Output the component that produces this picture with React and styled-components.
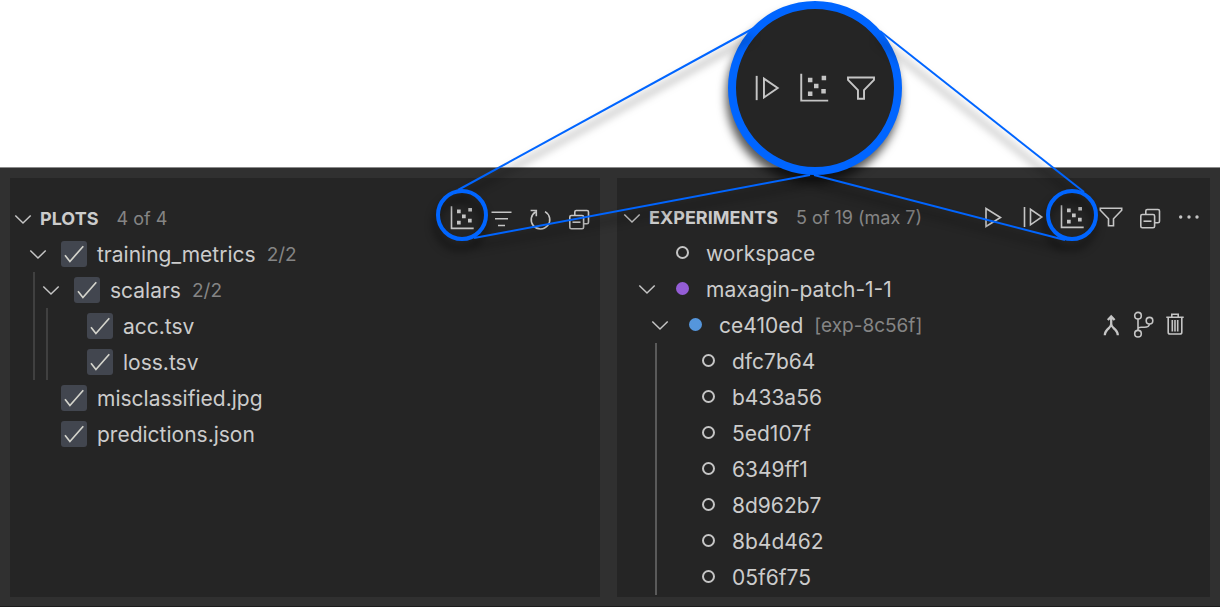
import React, { useLayoutEffect, useRef, useState } from "react";
import styled, { createGlobalStyle, ThemeProvider, css } from "styled-components";

const theme = {
  frame: "#303030",
  panel: "#252525",
  text: "#cccccc",
  muted: "#858585",
  icon: "#c5c5c5",
  accent: "#0065ff",
  checkbox: "#42464f",
  guide: "#404040",
  guideActive: "#5a5a5a",
  purple: "#945dd6",
  blue: "#5596dc",
};

const GlobalStyle = createGlobalStyle`
  * { box-sizing: border-box; }
  body {
    margin: 0;
    background: #ffffff;
    font-family: Inter, "Liberation Sans", sans-serif;
  }
`;

const Page = styled.main`
  position: relative;
  padding-top: 167px;
  overflow: hidden;
`;

const Workbench = styled.div`
  display: grid;
  grid-template-columns: 590fr 593fr;
  gap: 17px;
  padding: 10px 10px 9px;
  background: ${(p) => p.theme.frame};
  border-top: 1px solid #8a8a8a;
  border-bottom: 1px solid #1c1c1c;
`;

const Panel = styled.section`
  min-width: 0;
  min-height: 419px;
  padding-top: ${(p) => p.$top}px;
  background: ${(p) => p.theme.panel};
`;

const PanelHeader = styled.header`
  display: flex;
  align-items: center;
  height: 35px;
  padding: 0 2px 0 ${(p) => p.$inset}px;
`;

const Title = styled.h2`
  margin: 0 18px 0 7px;
  font-size: 18px;
  line-height: 36px;
  font-weight: 700;
  color: ${(p) => p.theme.text};
`;

const Summary = styled.span`
  flex: 1;
  font-size: 18px;
  line-height: 36px;
  white-space: nowrap;
  color: ${(p) => p.theme.muted};
`;

const IconButton = styled.button`
  display: flex;
  align-items: center;
  justify-content: center;
  flex: none;
  width: ${(p) => (p.$compact ? 32 : 39)}px;
  height: 32px;
  padding: 0;
  border: 0;
  background: none;
  color: ${(p) => p.theme.icon};
`;

const Toolbar = styled.div`
  display: flex;
  align-items: center;
  margin-bottom: 2px;
`;

const Twistie = styled.button`
  display: flex;
  align-items: center;
  justify-content: center;
  flex: none;
  width: 20px;
  height: 20px;
  padding: 0;
  border: 0;
  background: none;
  color: ${(p) => p.theme.icon};
`;

const TwistieSpace = styled.span`
  flex: none;
  width: 20px;
`;

const Tree = styled.ul`
  margin: 0;
  padding: 0 0 0 ${(p) => p.$inset}px;
  list-style: none;
`;

const Branch = styled.ul`
  margin: 0 0 0 5px;
  padding: 0 0 0 6px;
  list-style: none;
  border-left: 2px solid
    ${(p) =>
      p.$guide === "active" ? p.theme.guideActive : p.$guide === "none" ? "transparent" : p.theme.guide};
`;

const Row = styled.div`
  display: flex;
  align-items: center;
  height: 36px;
`;

const textLine = css`
  padding-top: 2px;
  line-height: 34px;
  white-space: nowrap;
`;

const Label = styled.label`
  ${textLine}
  font-size: 21px;
  color: ${(p) => p.theme.text};
`;

const Name = styled.span`
  ${textLine}
  font-size: 21px;
  color: ${(p) => p.theme.text};
`;

const Description = styled.span`
  ${textLine}
  flex: 1;
  margin-left: 11px;
  font-size: 19px;
  color: ${(p) => p.theme.muted};
`;

const RowActions = styled.div`
  display: flex;
  padding-right: 19px;
`;

const Check = styled.span`
  display: grid;
  flex: none;
  margin: 0 10px 0 13px;

  > * {
    grid-area: 1 / 1;
  }

  svg {
    pointer-events: none;
    color: #d4d4cc;
  }

  input:not(:checked) + svg {
    visibility: hidden;
  }
`;

const CheckInput = styled.input`
  appearance: none;
  width: 26px;
  height: 26px;
  margin: 0;
  border-radius: 3px;
  background: ${(p) => p.theme.checkbox};
`;

const MarkerSlot = styled.span`
  display: flex;
  justify-content: center;
  flex: none;
  width: 25px;
  margin: 0 11px 2px 13px;
`;

const Marker = styled.span`
  width: 13px;
  height: 13px;
  border-radius: 50%;
  border: 2px solid ${(p) => p.theme[p.$tone] || p.theme.icon};
  background: ${(p) => p.theme[p.$tone] || "transparent"};
`;

const Callout = styled.svg`
  position: absolute;
  inset: 0;
  width: 100%;
  height: 100%;
  pointer-events: none;
  fill: none;
  stroke: ${(p) => p.theme.accent};
  filter: drop-shadow(-2px 9px 4px rgba(0, 0, 0, 0.6));
`;

const Lens = styled.div`
  position: absolute;
  top: 1px;
  left: 66.8%;
  display: flex;
  align-items: center;
  justify-content: center;
  gap: 13px;
  width: 174px;
  height: 174px;
  margin-left: -87px;
  padding-right: 2px;
  border: 8px solid ${(p) => p.theme.accent};
  border-radius: 50%;
  background: ${(p) => p.theme.panel};
  color: ${(p) => p.theme.icon};
  box-shadow: -2px 8px 10px rgba(0, 0, 0, 0.65);
`;

const shapes = {
  scatter: (
    <>
      <path d="M3.5 2.3V24.4H25.7" />
      <path
        fill="currentColor"
        stroke="none"
        d="M9 5.5h3.7v3.7H9zM20.3 3.9h3.7v3.7h-3.7zM14 10.5h3.7v3.7h-3.7zM9 16.8h3.7v3.7H9zM20 14.8h3.7v3.7h-3.7z"
      />
    </>
  ),
  sort: <path d="M4.5 8.2H24.5M8 14.8H21M11 21.5H18" />,
  refresh: (
    <>
      <path d="M19 7.6A9.3 9.3 0 1 1 9.8 7.7" />
      <path d="M4.6 6.5H10.3V12.3" />
    </>
  ),
  collapse: (
    <>
      <rect x="4.8" y="11.5" width="13.8" height="13.3" rx="1.5" />
      <path d="M9.8 11V8Q9.8 6.5 11.3 6.5H22Q23.5 6.5 23.5 8V18.3Q23.5 19.8 22 19.8H19" />
      <path d="M7.5 18.2H15.5" />
    </>
  ),
  play: <path d="M6 5.5V23.5L20.5 14.5Z" />,
  resume: (
    <>
      <path d="M5.5 4V24" />
      <path d="M11.5 6.3V21.8L22.8 14Z" />
    </>
  ),
  filter: <path d="M3.3 5.3H24.7V7.3L16.5 15.8V22.8H11.5V15.8L3.3 7.3Z" />,
  more: (
    <g fill="currentColor" stroke="none">
      <circle cx="5.7" cy="14" r="1.7" />
      <circle cx="14" cy="14" r="1.7" />
      <circle cx="22" cy="14" r="1.7" />
    </g>
  ),
  merge: (
    <path strokeWidth="2.3" d="M10.8 9L14.2 5.4L17.6 9M14.2 6V13Q14.2 15 16.5 17Q20.8 20.5 20.8 24.3M14.2 13Q14.2 15 12 17Q7.8 20.5 7.8 24.3" />
  ),
  branch: (
    <>
      <circle cx="9" cy="4.7" r="3.3" />
      <circle cx="20.5" cy="9.7" r="3.3" />
      <circle cx="9" cy="22.7" r="3.3" />
      <path d="M9 8V19.4M9 17.5Q9.5 16.2 12 16.2H15.5Q20 16.2 20.5 13" />
    </>
  ),
  trash: (
    <>
      <path d="M5.3 6.2H22.7M10.8 6V3.2H17.2V6M7.2 6.5V21.2Q7.2 23 9 23H19Q20.8 23 20.8 21.2V6.5" />
      <path d="M11.3 9V20.5M14 9V20.5M16.7 9V20.5" />
    </>
  ),
  chevron: <path strokeWidth="1.5" d="M6.3 10.5L14 18L21.7 10.5" />,
  check: <path strokeWidth="1.8" d="M4.3 15.3L9.6 22L24 5.6" />,
};

function Icon({ name, size = 28 }) {
  return (
    <svg
      width={size}
      height={size}
      viewBox="0 0 28 28"
      fill="none"
      stroke="currentColor"
      strokeWidth="1.6"
      aria-hidden="true"
      style={{ flex: "none" }}
    >
      {shapes[name]}
    </svg>
  );
}

const plots = [
  {
    name: "training_metrics",
    note: "2/2",
    children: [
      { name: "scalars", note: "2/2", children: [{ name: "acc.tsv" }, { name: "loss.tsv" }] },
    ],
  },
  { name: "misclassified.jpg" },
  { name: "predictions.json" },
];

const experiments = [
  { name: "workspace" },
  {
    name: "maxagin-patch-1-1",
    tone: "purple",
    guide: "none",
    children: [
      {
        name: "ce410ed",
        note: "[exp-8c56f]",
        tone: "blue",
        guide: "active",
        actions: [
          ["merge", "Apply experiment"],
          ["branch", "Create branch"],
          ["trash", "Remove experiment"],
        ],
        children: ["dfc7b64", "b433a56", "5ed107f", "6349ff1", "8d962b7", "8b4d462", "05f6f75"].map(
          (name) => ({ name })
        ),
      },
    ],
  },
];

function TreeItem({ item, checkable }) {
  const [open, setOpen] = useState(true);
  return (
    <li>
      <Row>
        {item.children ? (
          <Twistie aria-label={`Toggle ${item.name}`} aria-expanded={open} onClick={() => setOpen(!open)}>
            <Icon name="chevron" />
          </Twistie>
        ) : (
          <TwistieSpace />
        )}
        {checkable ? (
          <>
            <Check>
              <CheckInput type="checkbox" id={item.name} defaultChecked />
              <Icon name="check" size={26} />
            </Check>
            <Label htmlFor={item.name}>{item.name}</Label>
          </>
        ) : (
          <>
            <MarkerSlot>
              <Marker $tone={item.tone} />
            </MarkerSlot>
            <Name>{item.name}</Name>
          </>
        )}
        {item.note && <Description>{item.note}</Description>}
        {item.actions && (
          <RowActions>
            {item.actions.map(([icon, label]) => (
              <IconButton key={icon} $compact aria-label={label}>
                <Icon name={icon} />
              </IconButton>
            ))}
          </RowActions>
        )}
      </Row>
      {item.children && open && (
        <Branch $guide={item.guide}>
          {item.children.map((child) => (
            <TreeItem key={child.name} item={child} checkable={checkable} />
          ))}
        </Branch>
      )}
    </li>
  );
}

function View({ title, summary, tools, items, inset, top, checkable, plotRef }) {
  return (
    <Panel $top={top}>
      <PanelHeader $inset={inset - 15}>
        <Twistie aria-label={`Toggle ${title}`}>
          <Icon name="chevron" />
        </Twistie>
        <Title>{title}</Title>
        <Summary>{summary}</Summary>
        <Toolbar>
          {tools.map(([icon, label]) => (
            <IconButton key={icon} aria-label={label} ref={icon === "scatter" ? plotRef : undefined}>
              <Icon name={icon} />
            </IconButton>
          ))}
        </Toolbar>
      </PanelHeader>
      <Tree $inset={inset}>
        {items.map((item) => (
          <TreeItem key={item.name} item={item} checkable={checkable} />
        ))}
      </Tree>
    </Panel>
  );
}

const plotTools = [
  ["scatter", "Show plots"],
  ["sort", "Select plots"],
  ["refresh", "Refresh plots"],
  ["collapse", "Collapse all"],
];

const experimentTools = [
  ["play", "Run experiment"],
  ["resume", "Resume experiment"],
  ["scatter", "Show plots"],
  ["filter", "Filter experiments"],
  ["collapse", "Collapse all"],
  ["more", "More actions"],
];

const RING_Y = 215;

export default function App() {
  const lensRef = useRef(null);
  const leftRef = useRef(null);
  const rightRef = useRef(null);
  const [anchors, setAnchors] = useState(null);

  useLayoutEffect(() => {
    const centre = (ref) => {
      const box = ref.current.getBoundingClientRect();
      return Math.round(box.left + box.width / 2);
    };
    const measure = () =>
      setAnchors({ lens: centre(lensRef), left: centre(leftRef), right: centre(rightRef) });
    measure();
    window.addEventListener("resize", measure);
    return () => window.removeEventListener("resize", measure);
  }, []);

  return (
    <ThemeProvider theme={theme}>
      <GlobalStyle />
      <Page>
        <Workbench>
          <View
            title="PLOTS"
            summary="4 of 4"
            tools={plotTools}
            items={plots}
            inset={18}
            top={23}
            checkable
            plotRef={leftRef}
          />
          <View
            title="EXPERIMENTS"
            summary="5 of 19 (max 7)"
            tools={experimentTools}
            items={experiments}
            inset={20}
            top={22}
            plotRef={rightRef}
          />
        </Workbench>
        <Lens ref={lensRef}>
          <Icon name="resume" size={34} />
          <Icon name="scatter" size={34} />
          <Icon name="filter" size={34} />
        </Lens>
        {anchors && (
          <Callout aria-hidden="true">
            <g strokeWidth="4">
              <circle cx={anchors.left} cy={RING_Y} r="24" />
              <circle cx={anchors.right} cy={RING_Y} r="24" />
            </g>
            <g strokeWidth="2">
              <line x1={anchors.lens - 61} y1="28" x2={anchors.left - 4} y2={RING_Y - 25} />
              <line x1={anchors.lens - 5} y1="175" x2={anchors.left + 12} y2={RING_Y + 23} />
              <line x1={anchors.lens + 65} y1="31" x2={anchors.right + 12} y2={RING_Y - 23} />
              <line x1={anchors.lens - 1} y1="175" x2={anchors.right - 7} y2={RING_Y + 25} />
            </g>
          </Callout>
        )}
      </Page>
    </ThemeProvider>
  );
}
